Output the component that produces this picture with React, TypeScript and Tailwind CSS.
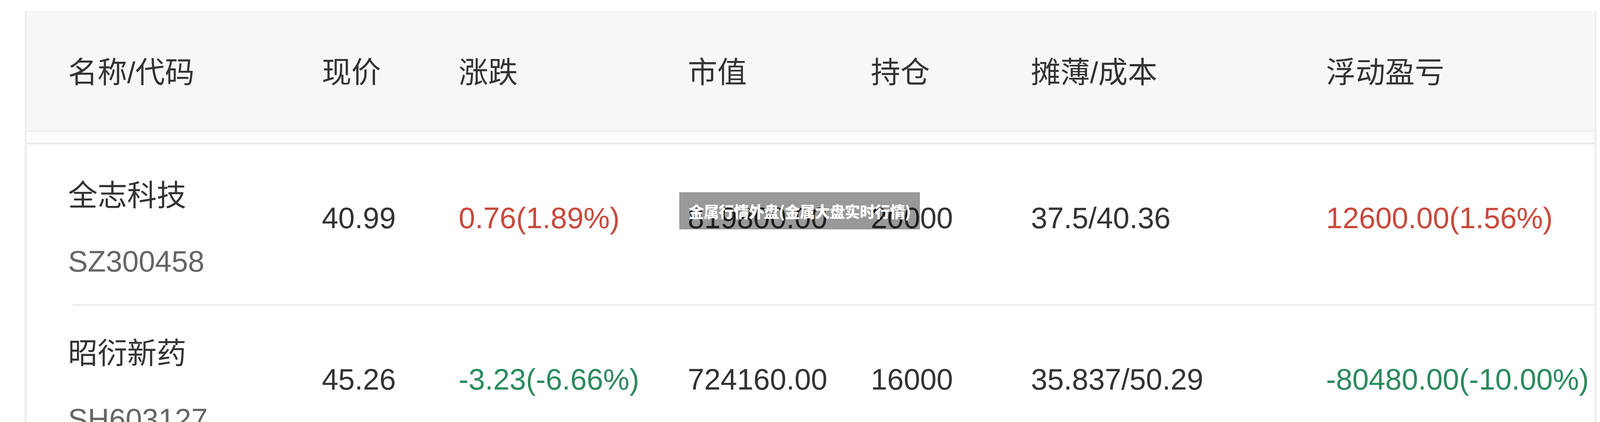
import React from "react";

type Row = {
  name: string;
  code: string;
  price: string;
  change: string;
  value: string;
  hold: string;
  cost: string;
  pnl: string;
  up: boolean;
};

const rows: Row[] = [
  {
    name: "全志科技",
    code: "SZ300458",
    price: "40.99",
    change: "0.76(1.89%)",
    value: "819800.00",
    hold: "20000",
    cost: "37.5/40.36",
    pnl: "12600.00(1.56%)",
    up: true,
  },
  {
    name: "昭衍新药",
    code: "SH603127",
    price: "45.26",
    change: "-3.23(-6.66%)",
    value: "724160.00",
    hold: "16000",
    cost: "35.837/50.29",
    pnl: "-80480.00(-10.00%)",
    up: false,
  },
];

const headers = ["名称/代码", "现价", "涨跌", "市值", "持仓", "摊薄/成本", "浮动盈亏"];

// first track is the left inset before the name column
const cols =
  "grid grid-cols-[minmax(0,147fr)_minmax(0,894fr)_minmax(0,482fr)_minmax(0,807fr)_minmax(0,645fr)_minmax(0,564fr)_minmax(0,1040fr)_minmax(0,945fr)]";
const font = "font-['Liberation_Sans','Noto_Sans_CJK_SC',sans-serif]";

export default function App() {
  return (
    <div className={`relative h-[1080px] w-full overflow-hidden bg-white ${font}`}>
      <div className="ml-[1.527%] mr-[0.231%] mt-[28px] border-l-[5px] border-r-[5px] border-[#eeeeee]">
        {/* header */}
        <div className={`${cols} h-[305px] items-center whitespace-nowrap bg-[#f7f7f7] pt-[12px] text-[1.846vw] text-[#333]`}>
          <div />
          {headers.map((h) => (
            <div key={h} className="leading-none">
              {h}
            </div>
          ))}
        </div>
        <div className="h-[32px] border-t-[4px] border-[#f0f0f0] bg-[#fbfbfb]" />
        <div className="h-[5px] bg-[#ebebeb]" />

        {rows.map((r, i) => (
          <div key={r.code}>
            <div className={`${cols} h-[408px] items-center whitespace-nowrap text-[1.846vw] text-[#333]`}>
              <div />
              <div className={`flex flex-col ${i === 0 ? "mt-[18px]" : ""}`}>
                <span className="leading-[172px]">{r.name}</span>
                <span className="leading-[164px] text-[#666]">{r.code}</span>
              </div>
              <div className="mb-[30px] leading-none">{r.price}</div>
              <div className={`mb-[30px] leading-none ${r.up ? "text-[#c9493b]" : "text-[#2b8a5e]"}`}>
                {r.change}
              </div>
              <div className="mb-[30px] leading-none">{r.value}</div>
              <div className="mb-[30px] leading-none">{r.hold}</div>
              <div className="mb-[30px] leading-none">{r.cost}</div>
              <div className={`mb-[30px] leading-none ${r.up ? "text-[#c9493b]" : "text-[#2b8a5e]"}`}>
                {r.pnl}
              </div>
            </div>
            <div className="ml-[2.95%] h-[5px] bg-[#ededed]" />
          </div>
        ))}
      </div>

      {/* caption laid over the table */}
      <div className="absolute left-[42.46%] top-[492px] flex h-[95px] w-[15.04%] items-center justify-center bg-black/40">
        <span className="whitespace-nowrap font-['Noto_Sans_CJK_SC',sans-serif] text-[0.959vw] font-black leading-none tracking-[-0.02em] text-white">
          金属行情外盘(金属大盘实时行情)
        </span>
      </div>
    </div>
  );
}
